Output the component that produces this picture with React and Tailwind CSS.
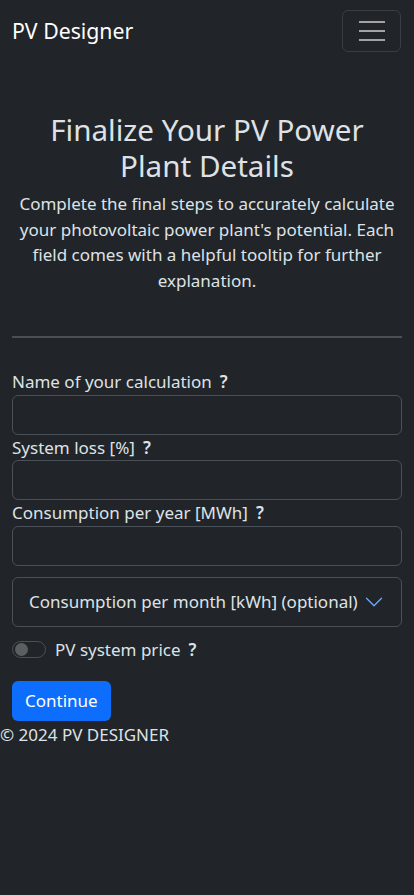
import React, { useState } from "react";

const Help = () => (
  <span className="ml-[8px] font-semibold text-[#dee2e6]">?</span>
);

const Field = ({ label }) => (
  <div>
    <label className="block text-[17px] leading-[25.5px]">
      {label}
      <Help />
    </label>
    <input
      type="text"
      className="block h-[40px] w-full rounded-[6px] border border-[#495057] bg-[#212529] px-3 text-[#dee2e6] outline-none"
    />
  </div>
);

const App = () => {
  const [priceOn, setPriceOn] = useState(false);

  return (
    <div
      className="min-h-[895px] bg-[#212529] text-[17px] leading-[25.5px] text-[#dee2e6]"
      style={{ fontFamily: '"Noto Sans", "Open Sans", sans-serif' }}
    >
      {/* navbar */}
      <nav className="flex h-[62px] items-center justify-between pl-3 pr-[13px]">
        <span className="text-[21.25px] leading-[32px] text-white">PV Designer</span>
        <button className="flex h-[42px] w-[59px] flex-col items-center justify-center gap-[7px] rounded-[6px] border border-[#3a3d41]">
          <span className="h-[2px] w-[26px] bg-[#a1a3a5]" />
          <span className="h-[2px] w-[26px] bg-[#a1a3a5]" />
          <span className="h-[2px] w-[26px] bg-[#a1a3a5]" />
        </button>
      </nav>

      <div className="px-3">
        <div className="mt-[50px] text-center">
          <h1 className="text-[29.6px] leading-[35.5px]">
            Finalize Your PV Power Plant Details
          </h1>
          <p className="mt-[8px] px-[2px]">
            Complete the final steps to accurately calculate your photovoltaic
            power plant's potential. Each field comes with a helpful tooltip
            for further explanation.
          </p>
        </div>

        <hr className="mt-[43px] border-0 border-t-2 border-[#4b4e52]" />

        <form className="mt-[31px]" onSubmit={(e) => e.preventDefault()}>
          <Field label="Name of your calculation" />
          <Field label="System loss [%]" />
          <Field label="Consumption per year [MWh]" />

          <button
            type="button"
            className="mt-[11px] flex h-[50px] w-full items-center rounded-[6px] border border-[#495057] bg-[#212529] pl-4 pr-[17px] text-left text-[17px] text-[#dee2e6]"
          >
            <span>Consumption per month [kWh] (optional)</span>
            <svg
              className="ml-auto shrink-0"
              width="20"
              height="20"
              viewBox="0 0 16 16"
              fill="#6ea8fe"
            >
              <path d="M1.646 4.646a.5.5 0 0 1 .708 0L8 10.293l5.646-5.647a.5.5 0 0 1 .708.708l-6 6a.5.5 0 0 1-.708 0l-6-6a.5.5 0 0 1 0-.708z" />
            </svg>
          </button>

          <div className="mt-[10px] flex h-[25.5px] items-center">
            <button
              type="button"
              onClick={() => setPriceOn(!priceOn)}
              className={`relative h-[17px] w-[34px] rounded-full border ${
                priceOn ? "border-[#0d6efd] bg-[#0d6efd]" : "border-[#495057] bg-[#212529]"
              }`}
            >
              <span
                className={`absolute top-[1px] h-[13px] w-[13px] rounded-full ${
                  priceOn ? "left-[18px] bg-white" : "left-[2px] bg-[#5c5f62]"
                }`}
              />
            </button>
            <span className="ml-[9px]">
              PV system price
              <Help />
            </span>
          </div>

          <button
            type="submit"
            className="mt-[19px] h-[40px] rounded-[6px] bg-[#0d6efd] px-[13px] text-[17px] text-white"
          >
            Continue
          </button>
        </form>
      </div>

      <footer className="mt-[1px]">© 2024 PV DESIGNER</footer>
    </div>
  );
};

export default App;
